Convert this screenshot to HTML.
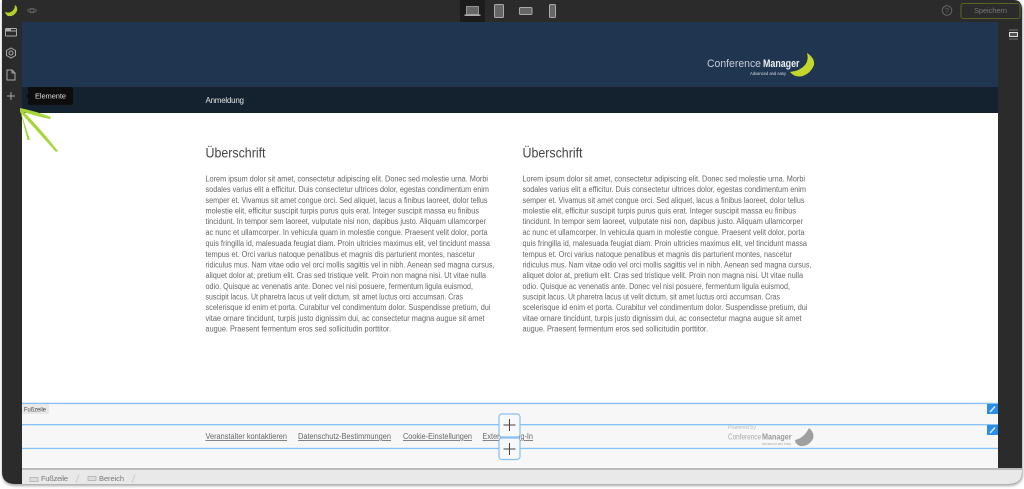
<!DOCTYPE html>
<html lang="de"><head><meta charset="utf-8"><title>Conference Manager</title>
<style>
html,body{margin:0;padding:0;width:1024px;height:489px;overflow:hidden;background:#fff}
svg{display:block;font-family:"Liberation Sans",sans-serif;filter:blur(.35px)}
</style></head><body>
<svg width="1024" height="489" viewBox="0 0 1024 489" xmlns="http://www.w3.org/2000/svg">
<defs><clipPath id="fr"><path d="M2 0H1014Q1022 0 1022 10V472Q1022 484 1008 484H16Q2 484 2 472Z"/></clipPath>
<filter id="b" x="-5%" y="-5%" width="110%" height="110%"><feGaussianBlur stdDeviation="1.2"/></filter></defs>
<path d="M2 2H1014Q1023 2 1023 10V473Q1023 486 1008 486H16Q2 486 2 473Z" fill="#aaa" filter="url(#b)"/>
<g clip-path="url(#fr)">
<rect x="0" y="0" width="1024" height="489" fill="#2b2b2b"/>
<rect x="22" y="22" width="976" height="65" fill="#1f3550"/>
<rect x="22" y="87" width="976" height="26" fill="#14212e"/>
<rect x="22" y="113" width="976" height="289" fill="#fff"/>
<rect x="22" y="402" width="976" height="68" fill="#f7f7f7"/>
<rect x="22" y="469" width="1002" height="20" fill="#e9e9e9"/>
<rect x="22" y="468" width="1002" height="2" fill="#bbb"/>
<rect x="460" y="0" width="25" height="22" fill="#1c1c1c"/>
</g>

<!-- top bar -->
<path d="M5 12Q11 14 14 9Q15 7 15 5Q18 7 17 11Q14 17 8 16Q6 15 5 12Z" fill="#b5cf2c"/>
<path d="M27.500 10.500Q32 6 36.500 10.500Q32 15 27.500 10.500Z" fill="none" stroke="#5c5c5c" stroke-width="1"/><circle cx="32" cy="10.500" r="1.800" fill="none" stroke="#5c5c5c"/>
<rect x="466.500" y="6.500" width="12" height="8" fill="#666" stroke="#aaa" stroke-width=".8"/><rect x="464.500" y="14.500" width="16" height="1.500" fill="#aaa"/>
<rect x="494.500" y="4.500" width="9" height="13" rx="1" fill="#666" stroke="#aaa"/>
<rect x="519.500" y="7.500" width="12.500" height="7" rx="1" fill="#666" stroke="#aaa"/>
<rect x="549.500" y="4.500" width="6" height="13" rx="1" fill="#666" stroke="#aaa"/>
<circle cx="947" cy="10.500" r="4.800" fill="none" stroke="#666"/><text x="947" y="13" font-size="7" fill="#666" text-anchor="middle">?</text>
<rect x="961" y="3.500" width="59" height="15" rx="2" fill="none" stroke="#5c6127"/>
<text x="990.500" y="13" font-size="7.500" fill="#777" text-anchor="middle" textLength="33">Speichern</text>

<!-- right sidebar icon -->
<path d="M1009 30H1018M1009 39H1018" stroke="#777"/><rect x="1009.500" y="32.500" width="8" height="4" fill="#555" stroke="#ddd" stroke-width="1"/>

<!-- left sidebar icons -->
<rect x="5.500" y="28.500" width="11" height="7.500" rx=".8" fill="none" stroke="#aaa"/><path d="M5.500 31H16.500" stroke="#aaa"/><path d="M6 29H11V31H6Z" fill="#aaa"/>
<path d="M11 48L15.500 50.500V55.500L11 58L6.500 55.500V50.500Z" fill="none" stroke="#aaa"/><circle cx="11" cy="53" r="2" fill="none" stroke="#aaa"/>
<path d="M7 70H12L15 73V80H7Z M12 70V73H15" fill="none" stroke="#aaa"/>
<path d="M11 92V100M7 96H15" stroke="#aaa"/>
<path d="M26 96L29 93V99Z" fill="#0d0d0d"/>
<rect x="28" y="87" width="45" height="18" rx="2" fill="#0d0d0d"/>
<text x="35" y="98.500" font-size="7.500" fill="#ddd" textLength="31">Elemente</text>

<!-- header -->
<text x="707" y="67" font-size="11" fill="#c8ced6" textLength="54" lengthAdjust="spacingAndGlyphs">Conference</text>
<text x="749.500" y="67" font-size="11" font-weight="bold" fill="#eef0f2" textLength="36.500" lengthAdjust="spacingAndGlyphs" transform="translate(13.500 0)">Manager</text>
<text x="750" y="75" font-size="4.800" fill="#d8dde2" textLength="36" lengthAdjust="spacingAndGlyphs">Advanced and easy</text>
<path d="M790 72Q800 71 805 65Q809 60 807 53Q815 58 814 65Q811 73 803 76Q795 78 790 72Z" fill="#c4d62e"/>
<text x="205.500" y="103" font-size="8" fill="#dfe3e6" textLength="38.500">Anmeldung</text>

<!-- arrow -->
<g fill="#a6d63c">
<path d="M20 108Q35 111 51 117L50 119Q35 116 20 111Z"/>
<path d="M20 109L30 140L27.500 140L20.500 112Z"/>
<path d="M21 109Q40 128 58 151L56 152Q38 132 20 112Z"/>
</g>

<!-- column 1 -->
<text x="205.500" y="157.500" font-size="14" fill="#444" textLength="60" lengthAdjust="spacingAndGlyphs">Überschrift</text>
<g font-size="8" fill="#666">
<text x="205.500" y="181.500" textLength="282.500" lengthAdjust="spacingAndGlyphs">Lorem ipsum dolor sit amet, consectetur adipiscing elit. Donec sed molestie urna. Morbi</text>
<text x="205.500" y="192" textLength="283.500" lengthAdjust="spacingAndGlyphs">sodales varius elit a efficitur. Duis consectetur ultrices dolor, egestas condimentum enim</text>
<text x="205.500" y="202.800" textLength="282" lengthAdjust="spacingAndGlyphs">semper et. Vivamus sit amet congue orci. Sed aliquet, lacus a finibus laoreet, dolor tellus</text>
<text x="205.500" y="213.500" textLength="273.500" lengthAdjust="spacingAndGlyphs">molestie elit, efficitur suscipit turpis purus quis erat. Integer suscipit massa eu finibus</text>
<text x="205.500" y="224.200" textLength="280.500" lengthAdjust="spacingAndGlyphs">tincidunt. In tempor sem laoreet, vulputate nisi non, dapibus justo. Aliquam ullamcorper</text>
<text x="205.500" y="235" textLength="282" lengthAdjust="spacingAndGlyphs">ac nunc et ullamcorper. In vehicula quam in molestie congue. Praesent velit dolor, porta</text>
<text x="205.500" y="246.200" textLength="284.500" lengthAdjust="spacingAndGlyphs">quis fringilla id, malesuada feugiat diam. Proin ultricies maximus elit, vel tincidunt massa</text>
<text x="205.500" y="256.800" textLength="269.500" lengthAdjust="spacingAndGlyphs">tempus et. Orci varius natoque penatibus et magnis dis parturient montes, nascetur</text>
<text x="205.500" y="267.500" textLength="289" lengthAdjust="spacingAndGlyphs">ridiculus mus. Nam vitae odio vel orci mollis sagittis vel in nibh. Aenean sed magna cursus,</text>
<text x="205.500" y="278.200" textLength="280.500" lengthAdjust="spacingAndGlyphs">aliquet dolor at, pretium elit. Cras sed tristique velit. Proin non magna nisi. Ut vitae nulla</text>
<text x="205.500" y="288.800" textLength="267.500" lengthAdjust="spacingAndGlyphs">odio. Quisque ac venenatis ante. Donec vel nisi posuere, fermentum ligula euismod,</text>
<text x="205.500" y="299.500" textLength="257.500" lengthAdjust="spacingAndGlyphs">suscipit lacus. Ut pharetra lacus ut velit dictum, sit amet luctus orci accumsan. Cras</text>
<text x="205.500" y="310.200" textLength="285" lengthAdjust="spacingAndGlyphs">scelerisque id enim et porta. Curabitur vel condimentum dolor. Suspendisse pretium, dui</text>
<text x="205.500" y="320.800" textLength="279" lengthAdjust="spacingAndGlyphs">vitae ornare tincidunt, turpis justo dignissim dui, ac consectetur magna augue sit amet</text>
<text x="205.500" y="331.500" textLength="185.500" lengthAdjust="spacingAndGlyphs">augue. Praesent fermentum eros sed sollicitudin porttitor.</text>
</g>

<!-- column 2 -->
<text x="522.500" y="157.500" font-size="14" fill="#444" textLength="60" lengthAdjust="spacingAndGlyphs">Überschrift</text>
<g font-size="8" fill="#666">
<text x="522.500" y="181.500" textLength="282.500" lengthAdjust="spacingAndGlyphs">Lorem ipsum dolor sit amet, consectetur adipiscing elit. Donec sed molestie urna. Morbi</text>
<text x="522.500" y="192" textLength="283.500" lengthAdjust="spacingAndGlyphs">sodales varius elit a efficitur. Duis consectetur ultrices dolor, egestas condimentum enim</text>
<text x="522.500" y="202.800" textLength="282" lengthAdjust="spacingAndGlyphs">semper et. Vivamus sit amet congue orci. Sed aliquet, lacus a finibus laoreet, dolor tellus</text>
<text x="522.500" y="213.500" textLength="273.500" lengthAdjust="spacingAndGlyphs">molestie elit, efficitur suscipit turpis purus quis erat. Integer suscipit massa eu finibus</text>
<text x="522.500" y="224.200" textLength="280.500" lengthAdjust="spacingAndGlyphs">tincidunt. In tempor sem laoreet, vulputate nisi non, dapibus justo. Aliquam ullamcorper</text>
<text x="522.500" y="235" textLength="282" lengthAdjust="spacingAndGlyphs">ac nunc et ullamcorper. In vehicula quam in molestie congue. Praesent velit dolor, porta</text>
<text x="522.500" y="246.200" textLength="284.500" lengthAdjust="spacingAndGlyphs">quis fringilla id, malesuada feugiat diam. Proin ultricies maximus elit, vel tincidunt massa</text>
<text x="522.500" y="256.800" textLength="269.500" lengthAdjust="spacingAndGlyphs">tempus et. Orci varius natoque penatibus et magnis dis parturient montes, nascetur</text>
<text x="522.500" y="267.500" textLength="289" lengthAdjust="spacingAndGlyphs">ridiculus mus. Nam vitae odio vel orci mollis sagittis vel in nibh. Aenean sed magna cursus,</text>
<text x="522.500" y="278.200" textLength="280.500" lengthAdjust="spacingAndGlyphs">aliquet dolor at, pretium elit. Cras sed tristique velit. Proin non magna nisi. Ut vitae nulla</text>
<text x="522.500" y="288.800" textLength="267.500" lengthAdjust="spacingAndGlyphs">odio. Quisque ac venenatis ante. Donec vel nisi posuere, fermentum ligula euismod,</text>
<text x="522.500" y="299.500" textLength="257.500" lengthAdjust="spacingAndGlyphs">suscipit lacus. Ut pharetra lacus ut velit dictum, sit amet luctus orci accumsan. Cras</text>
<text x="522.500" y="310.200" textLength="285" lengthAdjust="spacingAndGlyphs">scelerisque id enim et porta. Curabitur vel condimentum dolor. Suspendisse pretium, dui</text>
<text x="522.500" y="320.800" textLength="279" lengthAdjust="spacingAndGlyphs">vitae ornare tincidunt, turpis justo dignissim dui, ac consectetur magna augue sit amet</text>
<text x="522.500" y="331.500" textLength="185.500" lengthAdjust="spacingAndGlyphs">augue. Praesent fermentum eros sed sollicitudin porttitor.</text>
</g>

<!-- footer -->
<g font-size="8" fill="#666" text-decoration="underline">
<text x="205.500" y="439" textLength="81.500" lengthAdjust="spacingAndGlyphs">Veranstalter kontaktieren</text>
<text x="298" y="439" textLength="93" lengthAdjust="spacingAndGlyphs">Datenschutz-Bestimmungen</text>
<text x="403" y="439" textLength="69" lengthAdjust="spacingAndGlyphs">Cookie-Einstellungen</text>
<text x="482.500" y="439" textLength="50.500" lengthAdjust="spacingAndGlyphs">Externer Log-In</text>
</g>
<text x="728" y="429" font-size="5.500" fill="#bbb" textLength="28" lengthAdjust="spacingAndGlyphs">Powered by</text>
<text x="728" y="439.500" font-size="8.500" fill="#aaa" textLength="33" lengthAdjust="spacingAndGlyphs">Conference</text>
<text x="762" y="439.500" font-size="8.500" font-weight="bold" fill="#999" textLength="29.500" lengthAdjust="spacingAndGlyphs">Manager</text>
<text x="762" y="445" font-size="3.500" fill="#aaa" textLength="29" lengthAdjust="spacingAndGlyphs">Advanced and easy</text>
<path d="M795 440Q804 438 809 428Q815 433 813 439Q808 447 800 446Q795 444 795 440Z" fill="#a0a0a0"/>

<rect x="22" y="402.800" width="976" height="1.300" fill="#85c0f6"/>
<rect x="22" y="424" width="976" height="1.300" fill="#85c0f6"/>
<rect x="22" y="447.800" width="976" height="1.300" fill="#85c0f6"/>
<rect x="22" y="404" width="27" height="10" rx="1" fill="#e8e8e8"/>
<text x="24" y="411.500" font-size="6.500" fill="#444" textLength="22" lengthAdjust="spacingAndGlyphs">Fußzeile</text>

<rect x="499" y="414" width="21" height="23" rx="3" fill="#f8f8f8" stroke="#85c0f6" stroke-width="1.200"/>
<path d="M509.500 419V431M503.500 425H515.500" stroke="#444" stroke-width="1"/>
<rect x="499" y="438" width="21" height="21.500" rx="3" fill="#f8f8f8" stroke="#85c0f6" stroke-width="1.200"/>
<path d="M509.500 443V455M503.500 449H515.500" stroke="#444" stroke-width="1"/>

<rect x="987" y="404" width="11" height="10" fill="#2a8ee8"/>
<path d="M990 412L995 406.500" stroke="#d8ecff" stroke-width="1.500"/>
<rect x="987" y="425" width="11" height="10" fill="#2a8ee8"/>
<path d="M990 433L995 427.500" stroke="#d8ecff" stroke-width="1.500"/>

<!-- bottom bar -->
<rect x="30" y="477.500" width="8" height="4" fill="#ddd" stroke="#aaa" stroke-width=".7"/>
<text x="41" y="481" font-size="7.500" fill="#777" textLength="27">Fußzeile</text>
<path d="M76 483L79 474" stroke="#ccc"/>
<rect x="88" y="476.500" width="8" height="4" fill="#ddd" stroke="#aaa" stroke-width=".7"/>
<text x="99" y="481" font-size="7.500" fill="#777" textLength="25">Bereich</text>
<path d="M132 483L135 474" stroke="#ccc"/>
</svg>
</body></html>
